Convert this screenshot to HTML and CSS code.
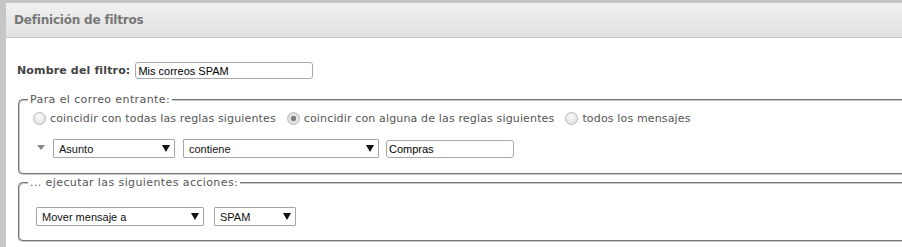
FILE: index.html
```html
<!DOCTYPE html>
<html lang="es">
<head>
  <meta charset="UTF-8"/>
  <meta name="viewport" content="width=device-width,initial-scale=1"/>
  <title>Definición de filtros</title>
  <link rel="stylesheet" href="styles.css">
</head>
<body>

  <div class="panel">
    <div class="panel-header">Definición de filtros</div>
    <form class="panel-body" id="filterForm">
      <div class="name-row">
        <label for="name">Nombre del filtro:</label>
        <input type="text" id="name" name="name" class="text-input name-input" value="Mis correos SPAM"/>
      </div>

      <fieldset class="group rules">
        <legend>Para el correo entrante:</legend>
        <div class="radio-row">
          <label><input type="radio" name="match" value="all"/>coincidir con todas las reglas siguientes</label>
          <label><input type="radio" name="match" value="any" checked/>coincidir con alguna de las reglas siguientes</label>
          <label><input type="radio" name="match" value="none"/>todos los mensajes</label>
        </div>
        <div class="rule-row">
          <span class="rule-toggle"></span>
          <div class="select-box sel-header">
            <select name="header">
              <option>Asunto</option>
              <option>De</option>
              <option>Para</option>
            </select>
          </div>
          <div class="select-box sel-op">
            <select name="op">
              <option>contiene</option>
              <option>no contiene</option>
              <option>es</option>
            </select>
          </div>
          <input type="text" name="target" class="text-input target-input" value="Compras"/>
        </div>
      </fieldset>

      <fieldset class="group actions">
        <legend>... ejecutar las siguientes acciones:</legend>
        <div class="action-row">
          <div class="select-box sel-action">
            <select name="action">
              <option>Mover mensaje a</option>
              <option>Copiar mensaje a</option>
              <option>Eliminar mensaje</option>
            </select>
          </div>
          <div class="select-box sel-folder">
            <select name="folder">
              <option>SPAM</option>
              <option>Inbox</option>
            </select>
          </div>
        </div>
      </fieldset>
    </form>
  </div>

</body>
</html>
```

FILE: styles.css
```css
html, body { overflow:hidden; }
body {
  margin:0; padding:3px 0 0 6px; background:#c6c6c6;
  font-family:"DejaVu Sans", Verdana, sans-serif; font-size:11px; line-height:13px; color:#555;
}
.panel { width:930px; background:#fff; }
.panel-header {
  height:34px; line-height:34px; padding-left:8px;
  background:linear-gradient(#f1f1f1, #e1e1e1);
  border-bottom:1px solid #c8c8c8;
  font-weight:bold; font-size:12px; color:#777; letter-spacing:-0.2px;
}
.panel-body { padding:24px 0 10px 12px; }

.name-row { display:flex; align-items:center; height:17px; margin-left:-1px; }
.name-row label { font-weight:bold; color:#444; margin-right:5px; letter-spacing:0.15px; }

.text-input {
  font-family:"Liberation Sans", Arial, sans-serif; font-size:11px; color:#000;
  height:17px; padding:0 2px; box-sizing:border-box;
  border:1px solid #a9a9a9; border-radius:3px; background:#fff;
}
.name-input { width:178px; }
.target-input { width:128px; height:18px; margin-top:1px; }

.group {
  margin:0; padding:0 0 0 12px;
  border:2px groove #c9c9c9; border-radius:5px;
  min-width:0;
}
.group legend { padding:0 2px; margin-left:-4px; color:#555; line-height:13px; letter-spacing:0.4px; }
.rules { margin-top:14px; padding-bottom:15px; }
.actions { margin-top:1px; padding-bottom:14px; }

.radio-row { display:flex; align-items:center; height:13px; margin-top:6px; }
.radio-row label { display:flex; align-items:center; margin-right:10px; letter-spacing:0.15px; }
.radio-row input {
  appearance:none; -webkit-appearance:none;
  width:13px; height:13px; margin:0 4px 0 1px; border-radius:50%;
  border:1px solid #b9b9b9; box-sizing:border-box;
  background:radial-gradient(circle at 50% 35%, #fafafa, #dcdcdc);
}
.radio-row input:checked {
  background:radial-gradient(circle, #7d7d7d 0 2.5px, #e6e6e6 3px, #d4d4d4);
}

.rule-row { display:flex; align-items:center; height:19px; margin-top:14px; }
.rule-toggle {
  width:0; height:0; margin:0 8px 3px 5px;
  border-left:4px solid transparent; border-right:4px solid transparent;
  border-top:5px solid #8a8a8a;
}

.select-box { position:relative; margin-right:8px; }
.select-box select {
  appearance:none; -webkit-appearance:none; width:100%; display:block;
  height:19px; padding:0 14px 0 5px; box-sizing:border-box;
  border:1px solid #a6a6a6; border-radius:1px; background:#fff;
  font-family:"Liberation Sans", Arial, sans-serif; font-size:11px; color:#111;
}
.select-box::after {
  content:""; position:absolute; right:5px; top:6px; pointer-events:none;
  border-left:4px solid transparent; border-right:4px solid transparent;
  border-top:7px solid #111;
}
.sel-header { width:122px; }
.sel-op { width:196px; margin-right:7px; }

.action-row { display:flex; height:19px; margin:18px 0 0 4px; }
.sel-action { width:168px; margin-right:10px; }
.sel-folder { width:82px; }
```
